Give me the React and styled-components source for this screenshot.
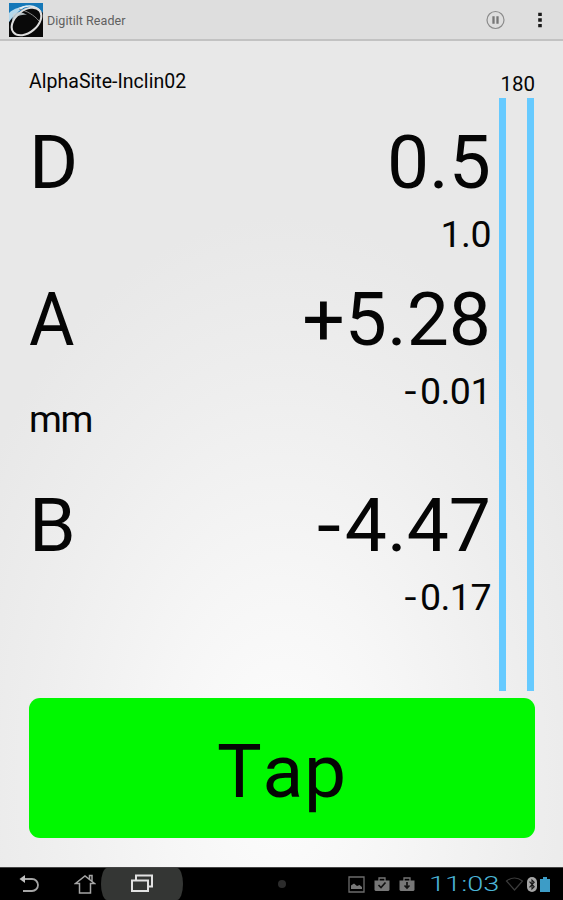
import React from "react";
import styled, { createGlobalStyle } from "styled-components";

const GlobalStyle = createGlobalStyle`
  *, *::before, *::after { box-sizing: border-box; }
  body { margin: 0; background: #000; font-family: Roboto, "Noto Sans", sans-serif; color: #050505; }
`;

const Screen = styled.div`
  width: 563px;
  height: 900px;
  display: flex;
  flex-direction: column;
  overflow: hidden;
`;

const AppBar = styled.header`
  height: 41px;
  flex: none;
  display: flex;
  align-items: center;
  padding: 0 18px 0 9px;
  background: #dedede;
  border-bottom: 2px solid #c2c2c2;
`;

const AppTitle = styled.h1`
  flex: 1;
  margin: 2px 0 0 4px;
  font-size: 12.5px;
  font-weight: 400;
  line-height: 16px;
  letter-spacing: 0.05px;
  color: #606060;
`;

const AppActions = styled.div`
  display: flex;
  align-items: center;
  gap: 30px;
`;

const Content = styled.main`
  height: 826px;
  flex: none;
  display: flex;
  flex-direction: column;
  padding: 27px 28px 0 29px;
  background: radial-gradient(ellipse 350px 560px at 50% 735px, #fdfdfd 0%, #f6f6f6 35%, #eeeeee 70%, #e8e8e8 100%);
`;

const Panel = styled.section`
  display: flex;
  justify-content: space-between;
  height: 630px;
`;

const Readings = styled.div`
  width: 462px;
  display: flex;
  flex-direction: column;
`;

const SiteName = styled.div`
  height: 50px;
  font-size: 19.5px;
  line-height: 28px;
  letter-spacing: 0.03px;
`;

const Reading = styled.div`
  height: ${(p) => p.$height}px;
  display: grid;
  grid-template-columns: auto 1fr;
  grid-template-rows: 88px 44px;
  row-gap: 7px;
`;

const Axis = styled.div`
  font-size: 75px;
  line-height: 88px;
  transform: scaleX(${(p) => p.$stretch || 1});
  transform-origin: left;
`;

const Value = styled.div`
  font-size: 75px;
  line-height: 88px;
  text-align: right;
  white-space: nowrap;
`;

const Unit = styled.div`
  font-size: 37.5px;
  line-height: 44px;
  padding-top: 27px;
  letter-spacing: -1.5px;
`;

const Delta = styled.div`
  grid-column: 2;
  font-size: 37.5px;
  line-height: 42px;
  letter-spacing: -0.5px;
  text-align: right;
`;

const Minus = styled.span`
  display: inline-block;
  margin-right: ${(p) => (p.$wide ? 0.1 : 0.05)}em;
  transform: scaleX(1.15);
  transform-origin: right;
`;

const Gauge = styled.div`
  width: 36px;
  display: flex;
  flex-direction: column;
`;

const GaugeLabel = styled.div`
  height: 30px;
  font-size: 20.5px;
  line-height: 32px;
  text-align: right;
  white-space: nowrap;
`;

const GaugeBars = styled.div`
  height: 593px;
  display: flex;
  justify-content: space-between;
  padding-right: 1px;
`;

const GaugeBar = styled.div`
  width: 7px;
  background: #66caff;
`;

const TapButton = styled.button`
  height: 140px;
  width: 506px;
  padding: 6px 0 0;
  border: 0;
  border-radius: 11px;
  background: #00f800;
  color: #050505;
  font-family: inherit;
  font-size: 75px;
  font-kerning: none;
  letter-spacing: 0.8px;
  line-height: 90px;
`;

const SystemBar = styled.nav`
  height: 33px;
  flex: none;
  display: flex;
  align-items: center;
  background: #000;
  border-top: 1px solid #454545;
`;

const NavKey = styled.span`
  width: ${(p) => p.$width}px;
  height: 32px;
  display: flex;
  align-items: center;
  justify-content: center;
  padding-left: ${(p) => p.$inset || 0}px;
  background: ${(p) => (p.$active ? "#343634" : "transparent")};
  border-radius: ${(p) => (p.$active ? "6px / 16px" : "0")};
`;

const Dot = styled.span`
  width: 8px;
  height: 8px;
  margin-left: 95px;
  border-radius: 50%;
  background: #2c2c2c;
`;

const Notices = styled.div`
  display: flex;
  align-items: center;
  gap: 9px;
  margin-left: 62px;
`;

const Clock = styled.time`
  width: 70px;
  margin-left: 14px;
  font-size: 20px;
  font-weight: 300;
  line-height: 32px;
  color: #4bb4d6;
  white-space: nowrap;

  span {
    display: inline-block;
    transform: scaleX(1.45);
    transform-origin: left;
  }
`;

const Radios = styled.div`
  display: flex;
  align-items: center;
  gap: 3px;
  margin-left: 6px;
`;

const LogoIcon = () => (
  <svg width="34" height="34" viewBox="0 0 34 34">
    <rect width="34" height="34" fill="#090909" />
    <path d="M0 0H34V10C29 4 21 4 14 7C8 10 3 14 0 19Z" fill="#1678b8" />
    <path d="M0 10C5 5 12 4 19 2C11 7 5 11 0 19Z" fill="#b4d8ec" />
    <path d="M10 6C16 2 26 1 32 9" fill="none" stroke="#e4eef4" strokeWidth="1.6" />
    <path d="M10 6C18 8 25 12 30 18" fill="none" stroke="#8a8a8a" strokeWidth="1" />
    <ellipse cx="17.5" cy="18.5" rx="17" ry="11" transform="rotate(-40 17.5 18.5)" fill="none" stroke="#dedede" strokeWidth="2.1" />
    <path d="M4 11C9 8 14 9 18 12C12 11 7 13 3 18Z" fill="#c9d3d8" opacity=".85" />
  </svg>
);

const PauseIcon = () => (
  <svg width="20" height="20" viewBox="0 0 20 20">
    <circle cx="10.5" cy="10" r="8.5" fill="none" stroke="#8b8b8b" strokeWidth="1.2" />
    <path d="M8.5 6.2V13.8M12.5 6.2V13.8" stroke="#777" strokeWidth="2.3" />
  </svg>
);

const OverflowIcon = () => (
  <svg width="10" height="18" viewBox="0 0 10 18">
    <path d="M3.2 1.7H6.8V5.1H3.2ZM3.2 7.3H6.8V10.7H3.2ZM3.2 12.9H6.8V16.3H3.2Z" fill="#1b1b1b" />
  </svg>
);

const BackIcon = () => (
  <svg width="22" height="20" viewBox="0 0 22 20" fill="none" stroke="#a5a5a5" strokeWidth="1.8">
    <path d="M3 5H14A6 6 0 0 1 14 17H5" />
    <path d="M7 1L1.5 5L7 9Z" fill="#c0c0c0" stroke="none" />
  </svg>
);

const HomeIcon = () => (
  <svg width="22" height="21" viewBox="0 0 22 21" fill="none" stroke="#a5a5a5" strokeWidth="1.5">
    <path d="M5.5 9.5H1.5L11 2L20.5 9.5H16.5V19H5.5ZM15.5 5V1.5H18V7" />
  </svg>
);

const RecentsIcon = () => (
  <svg width="23" height="20" viewBox="0 0 23 20" fill="none" stroke="#e2e2e2" strokeWidth="2">
    <path d="M1 6.5H17V17H1Z" />
    <path d="M5 6V1.5H21V12.5H18" />
  </svg>
);

const PictureIcon = () => (
  <svg width="17" height="17" viewBox="0 0 17 17">
    <path d="M1 1H16V16H1Z" fill="none" stroke="#6c6c6c" strokeWidth="1.3" />
    <path d="M3 13V9.5L6 7.5L9 10L11.5 9L14 11V13Z" fill="#777" />
  </svg>
);

const CaseIcon = ({ children }) => (
  <svg width="16" height="16" viewBox="0 0 16 16" fill="none">
    <path d="M5 5V2H11V5" stroke="#747474" strokeWidth="1.3" />
    <path d="M.5 4.5H15.5V14L14.5 15H1.5L.5 14Z" fill="#777" />
    <g stroke="#111" strokeWidth="1.7">{children}</g>
  </svg>
);

const WifiIcon = () => (
  <svg width="19" height="14" viewBox="0 0 19 14">
    <path d="M1.5 4Q9.5-2 17.5 4L9.5 13Z" fill="none" stroke="#3b3b3b" strokeWidth="1.2" />
  </svg>
);

const BluetoothIcon = () => (
  <svg width="10" height="15" viewBox="0 0 10 15">
    <rect width="10" height="15" rx="5" fill="#a6a6a6" />
    <path d="M2.5 4.7L7.2 9.8L5 12V3L7.2 5.2L2.5 10.3" fill="none" stroke="#161616" strokeWidth="1.1" />
  </svg>
);

const BatteryIcon = () => (
  <svg width="10" height="15" viewBox="0 0 10 15">
    <path d="M3 0H7V2H10V15H0V2H3Z" fill="#3d9cc6" />
  </svg>
);

export default function App() {
  return (
    <>
      <GlobalStyle />
      <Screen>
        <AppBar>
          <LogoIcon />
          <AppTitle>Digitilt Reader</AppTitle>
          <AppActions>
            <PauseIcon />
            <OverflowIcon />
          </AppActions>
        </AppBar>
        <Content>
          <Panel>
            <Readings>
              <SiteName>AlphaSite-Inclin02</SiteName>
              <Reading $height={157}>
                <Axis>D</Axis>
                <Value>0.5</Value>
                <Delta>1.0</Delta>
              </Reading>
              <Reading $height={206}>
                <Axis $stretch={0.93}>A</Axis>
                <Value>+5.28</Value>
                <Unit>mm</Unit>
                <Delta><Minus $wide>-</Minus>0.01</Delta>
              </Reading>
              <Reading $height={150}>
                <Axis>B</Axis>
                <Value><Minus>-</Minus>4.47</Value>
                <Delta><Minus $wide>-</Minus>0.17</Delta>
              </Reading>
            </Readings>
            <Gauge>
              <GaugeLabel>180</GaugeLabel>
              <GaugeBars>
                <GaugeBar />
                <GaugeBar />
              </GaugeBars>
            </Gauge>
          </Panel>
          <TapButton>Tap</TapButton>
        </Content>
        <SystemBar>
          <NavKey $width={58}><BackIcon /></NavKey>
          <NavKey $width={43} $inset={11}><HomeIcon /></NavKey>
          <NavKey $width={82} $active><RecentsIcon /></NavKey>
          <Dot />
          <Notices>
            <PictureIcon />
            <CaseIcon><path d="M4.5 9L7 11.5L11.5 6.5" /></CaseIcon>
            <CaseIcon><path d="M8 6V12M5.5 9.5L8 12L10.5 9.5" /></CaseIcon>
          </Notices>
          <Clock><span>11:03</span></Clock>
          <Radios>
            <WifiIcon />
            <BluetoothIcon />
            <BatteryIcon />
          </Radios>
        </SystemBar>
      </Screen>
    </>
  );
}
